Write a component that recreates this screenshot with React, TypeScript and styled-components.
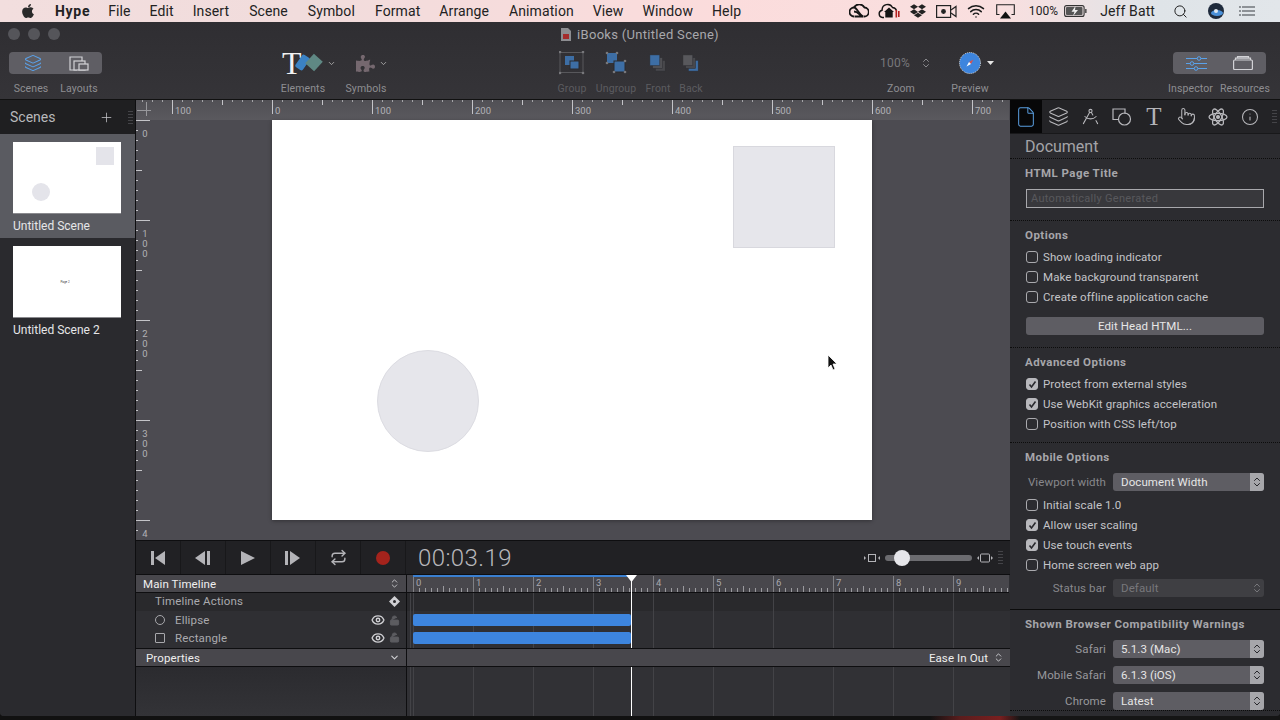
import React from "react";
import styled, { createGlobalStyle } from "styled-components";
import { ChevronDown, ChevronsUpDown, DraftingCompass, Eye, File as FileIcon, Info, Layers, LockOpen, Pointer, Repeat, Search, Wifi, Plus } from "lucide-react";
import { FaApple, FaDropbox, FaPuzzlePiece } from "react-icons/fa";

const UI = `Roboto, "Liberation Sans", sans-serif`;

const Global = createGlobalStyle`
  html, body { margin: 0; padding: 0; height: 100%; background: #121214; overflow: hidden; }
  #root { width: 1280px; height: 720px; overflow: hidden; }
  * { box-sizing: border-box; }
`;

const Page = styled.div`
  width: 1280px; height: 720px; display: flex; flex-direction: column; font-family: ${UI};
  background: linear-gradient(90deg, #111 0 930px, #5a1d1d 960px, #7a1f1f 1000px, #151515 1020px);
`;
const MenuBar = styled.div`
  height: 22px; flex: none; display: flex; align-items: center; color: #222; font-size: 14px;
  background: linear-gradient(90deg, #f2dede 0, #f1dcdc 300px, #fbdcdc 720px, #f9dfdf 1000px, #dfe4e8 1160px, #e2e6ea 1280px);
`;
const AppleSlot = styled.span` width: 55px; display: flex; justify-content: center; `;
const MenuItem = styled.span<{ $bold?: boolean; $ml?: number; $size?: number }>`
  font-weight: ${(p) => (p.$bold ? 700 : 400)};
  font-size: ${(p) => p.$size ?? 14}px;
  letter-spacing: ${(p) => (p.$bold ? 0.7 : 0.1)}px;
  margin-left: ${(p) => p.$ml ?? 0}px; white-space: nowrap;
`;
const MenuExtras = styled.div` margin-left: auto; padding-right: 18px; display: flex; align-items: center; height: 22px; `;
const Slot = styled.span<{ $w: number; $ml?: number }>`
  width: ${(p) => p.$w}px; margin-left: ${(p) => p.$ml ?? 0}px; display: flex; align-items: center; justify-content: center;
`;

const Win = styled.div`
  height: 694px; flex: none; display: flex; flex-direction: column; background: #2b2b2f;
  border-radius: 0 0 4px 4px; overflow: hidden;
`;
const Toolbar = styled.div`
  height: 78px; flex: none; background: linear-gradient(#2f2e32, #353438); border-bottom: 1px solid #111; position: relative;
  display: flex; flex-direction: column;
`;
const TitleRow = styled.div` height: 30px; flex: none; padding-bottom: 6px; display: flex; align-items: center; position: relative; justify-content: center; color: #a8a8ac; font-size: 13px; gap: 6px; letter-spacing: .3px; `;
const Lights = styled.div` position: absolute; left: 8px; top: 6px; display: flex; gap: 8px; `;
const Light = styled.i` width: 12px; height: 12px; border-radius: 50%; background: #55555a; display: block; `;
const ToolRow = styled.div` display: flex; padding-left: 9px; `;
const ToolItem = styled.div<{ $w: number; $ml?: number; $off?: boolean }>`
  width: ${(p) => p.$w}px; margin-left: ${(p) => p.$ml ?? 0}px; display: flex; flex-direction: column; align-items: center;
  color: ${(p) => (p.$off ? "#5c5c60" : "#8e8e92")}; font-size: 10.5px; letter-spacing: .1px; white-space: nowrap;
`;
const ToolIcon = styled.div<{ $seg?: "l" | "r"; $pl?: number; $start?: boolean }>`
  height: 22px; width: 100%; display: flex; align-items: center; justify-content: ${(p) => (p.$start ? "flex-start" : "center")}; gap: 1px;
  padding-left: ${(p) => p.$pl ?? 0}px;
  background: ${(p) => (p.$seg ? "#5f5e64" : "transparent")};
  border-radius: ${(p) => (p.$seg === "l" ? "4px 0 0 4px" : p.$seg === "r" ? "0 4px 4px 0" : "0")};
  & > svg, & > span { flex: none; }
`;
const ToolLabel = styled.div<{ $mr?: number; $ml?: number }>`
  height: 12px; line-height: 12px; margin: 9px ${(p) => p.$mr ?? 0}px 0 ${(p) => p.$ml ?? 0}px;
`;
const SerifT = styled.span` font-family: "Liberation Serif", serif; color: #f2f2f2; font-size: 32px; line-height: 22px; width: 12px; `;
const ZoomValue = styled.span` color: #77777b; font-size: 12px; letter-spacing: .2px; margin-right: 9px; `;

const Main = styled.div` flex: 1; min-height: 0; display: flex; `;
const Sidebar = styled.div` width: 136px; flex: none; background: #2a2a2e; border-right: 1px solid #0e0e10; display: flex; flex-direction: column; `;
const SideHead = styled.div`
  height: 34px; flex: none; background: #1f1f21; color: #b8b8bc; font-size: 14px; display: flex; align-items: center; padding: 0 2px 0 10px; justify-content: space-between;
`;
const SideTools = styled.div` display: flex; align-items: center; gap: 14px; `;
const SceneCard = styled.div<{ $on?: boolean }>`
  height: 104px; flex: none; padding: 8px 14px 0 13px; background: ${(p) => (p.$on ? "#5a5b61" : "transparent")};
`;
const Thumb = styled.div` width: 108px; height: 71px; background: #fff; position: relative; display: flex; align-items: center; justify-content: center; box-shadow: 0 1px 0 #8a8a8e; `;
const ThumbRect = styled.i` position: absolute; left: 83px; top: 5px; width: 18px; height: 18px; background: #e4e4ea; `;
const ThumbCircle = styled.i` position: absolute; left: 19px; top: 41px; width: 18px; height: 18px; border-radius: 50%; background: #e4e4ea; `;
const ThumbText = styled.span` font-size: 3px; color: #444; margin-right: 4px; `;
const SceneName = styled.div` margin-top: 6px; font-size: 12px; line-height: 14px; color: #e6e6e8; `;

const Center = styled.div` flex: 1; min-width: 0; display: flex; flex-direction: column; background: #4c4b51; `;
const TopRuler = styled.svg` display: block; flex: none; background: linear-gradient(#515055, #5a595e); `;
const StageRow = styled.div` height: 420px; flex: none; display: flex; position: relative; `;
const SideRuler = styled.svg` display: block; flex: none; `;
const Artboard = styled.div` width: 600px; height: 400px; background: #fff; margin-left: 122px; position: relative; box-shadow: 0 1px 4px rgba(0,0,0,.35); `;
const ArtRect = styled.div` position: absolute; left: 461px; top: 26px; width: 102px; height: 102px; background: #e6e6eb; border: 1px solid #d8d8de; `;
const ArtCircle = styled.div` position: absolute; left: 105px; top: 230px; width: 102px; height: 102px; border-radius: 50%; background: #e6e6eb; border: 1px solid #dcdce2; `;
const Cursor = styled.svg` position: absolute; left: 555px; top: 234px; `;

const Timeline = styled.div` height: 176px; flex: none; display: flex; flex-direction: column; background: #2e2e32; border-top: 1px solid #0e0e10; `;
const Transport = styled.div` height: 34px; flex: none; display: flex; align-items: stretch; background: #212124; border-bottom: 1px solid #0e0e10; `;
const TransportBtn = styled.div` width: 45px; display: flex; align-items: center; justify-content: center; border-right: 1px solid #18181a; color: #b4b4b8; `;
const Timecode = styled.div` font-size: 24px; font-weight: 300; color: #b8b8bc; margin-left: 12px; width: 446px; line-height: 34px; letter-spacing: .4px; `;
const ZoomSlider = styled.div` display: flex; align-items: center; gap: 5px; `;
const SliderTrack = styled.div` width: 87px; height: 6px; border-radius: 3px; background: #6c6c70; position: relative; `;
const SliderThumb = styled.i` position: absolute; left: 9px; top: -5px; width: 16px; height: 16px; border-radius: 50%; background: #e6e6ea; `;

const Upper = styled.div` display: flex; flex: none; border-bottom: 1px solid #0e0e10; `;
const Labels = styled.div` width: 271px; flex: none; border-right: 1px solid #0e0e10; display: flex; flex-direction: column; `;
const HeadRow = styled.div`
  height: 18px; flex: none; background: #48474c; border-bottom: 1px solid #0e0e10; display: flex; align-items: center; justify-content: space-between;
  color: #f0f0f0; font-size: 11.5px; padding: 0 6px 0 7px; letter-spacing: .1px;
`;
const LabelRow = styled.div<{ $h: number; $dark?: boolean; $pb?: number }>`
  height: ${(p) => p.$h}px; flex: none; display: flex; align-items: center; padding: 0 6px ${(p) => p.$pb ?? 0}px 19px; font-size: 11.5px; letter-spacing: .15px;
  background: ${(p) => (p.$dark ? "#29292c" : "#2f2f33")}; color: #aaaaae;
`;
const RowName = styled.span<{ $ml?: number }>` margin-left: ${(p) => p.$ml ?? 0}px; flex: 1; `;
const Shape = styled.i<{ $round?: boolean }>` width: 10px; height: 10px; border: 1px solid #a8a8ac; border-radius: ${(p) => (p.$round ? "50%" : "1px")}; display: block; `;
const Tracks = styled.div` flex: 1; min-width: 0; position: relative; display: flex; flex-direction: column; `;
const gridBg = `repeating-linear-gradient(90deg, #434347 0 1px, transparent 1px 60px)`;
const TrackRuler = styled.svg` display: block; flex: none; background: #48474c; border-bottom: 1px solid #0e0e10; `;
const TrackRow = styled.div<{ $h: number; $dark?: boolean }>`
  height: ${(p) => p.$h}px; flex: none; padding: 3px 0 0 6px;
  background-image: ${gridBg}; background-position: 6px 0; background-color: ${(p) => (p.$dark ? "#29292c" : "#2f2f33")};
`;
const Bar = styled.div` width: 218px; height: 12px; border-radius: 2px; background: #3d85de; `;
const Playhead = styled.i` position: absolute; left: 224px; top: 0; bottom: 0; width: 1px; background: #fff; `;
const Head = styled.svg` position: absolute; left: 219px; top: 0; `;
const Progress = styled.i` position: absolute; left: 6px; top: 0; width: 218px; height: 2px; background: #3a7fd0; `;
const PropsBar = styled.div` height: 18px; flex: none; display: flex; background: #48474c; border-bottom: 1px solid #0e0e10; color: #eee; font-size: 11.5px; letter-spacing: .1px; `;
const PropsLeft = styled.div` width: 271px; flex: none; display: flex; align-items: center; justify-content: space-between; padding: 0 6px 0 10px; border-right: 1px solid #0e0e10; `;
const PropsRight = styled.div` flex: 1; display: flex; align-items: center; justify-content: flex-end; padding-right: 6px; gap: 5px; `;
const Lower = styled.div` flex: 1; display: flex; min-height: 0; `;
const LowerLeft = styled.div` width: 271px; flex: none; border-right: 1px solid #0e0e10; background: linear-gradient(#2b2b2f, #333337); `;
const LowerRight = styled.div` flex: 1; position: relative; background-image: ${gridBg}; background-position: 6px 0; background-color: #313135; `;

const Inspector = styled.div` width: 270px; flex: none; background: #2c2c30; overflow: hidden; display: flex; flex-direction: column; `;
const Tabs = styled.div` height: 34px; flex: none; display: flex; background: #232326; border-bottom: 1px solid #18181a; `;
const Tab = styled.div<{ $on?: boolean; $w?: number }>`
  width: ${(p) => p.$w ?? 32}px; flex: none; display: flex; align-items: center; justify-content: center; color: #b8b8bc;
  background: ${(p) => (p.$on ? "#070708" : "transparent")};
`;
const SerifTab = styled.span` font-family: "Liberation Serif", serif; font-size: 25px; line-height: 25px; color: #b4b4b8; `;
const DocTitle = styled.div` height: 25px; flex: none; color: #a4a4a8; font-size: 16px; line-height: 25px; padding-left: 15px; border-bottom: 1px dotted #0c0c0c; `;
const Section = styled.section<{ $pb?: number; $solid?: boolean }>`
  flex: none; padding: 7px 16px ${(p) => p.$pb ?? 12}px 15px; border-bottom: 1px ${(p) => (p.$solid ? "solid" : "dotted")} #0c0c0c;
`;
const Heading = styled.h4<{ $mb?: number }>` margin: 0 0 ${(p) => p.$mb ?? 5}px; font-size: 11.5px; line-height: 14px; font-weight: 700; color: #a6a6aa; letter-spacing: .45px; `;
const TextBox = styled.div` height: 19px; margin-left: 1px; border: 1px solid #a8a8ac; background: #38383c; color: #58585c; font-size: 11px; line-height: 18px; padding-left: 4px; letter-spacing: .3px; `;
const CheckRow = styled.div` height: 20px; display: flex; align-items: center; gap: 5px; margin-left: 1px; font-size: 11.5px; color: #c4c4c8; letter-spacing: .1px; `;
const Box = styled.span<{ $on?: boolean }>`
  width: 12px; height: 12px; border-radius: 3px; flex: none; display: flex; align-items: center; justify-content: center;
  border: 1px solid ${(p) => (p.$on ? "#b8b8bc" : "#aaaaae")}; background: ${(p) => (p.$on ? "#b8b8bc" : "transparent")};
`;
const Btn = styled.div` height: 18px; margin: 10px 0 0 1px; border-radius: 3px; background: #5e5d63; color: #e6e6e6; font-size: 11.5px; line-height: 18px; text-align: center; letter-spacing: .1px; `;
const FormRow = styled.div<{ $mt?: number }>` display: flex; align-items: center; gap: 7px; margin-top: ${(p) => p.$mt ?? 0}px; height: 18px; `;
const FormLabel = styled.span<{ $dim?: boolean }>` width: 81px; flex: none; text-align: right; font-size: 11.5px; color: ${(p) => (p.$dim ? "#88888c" : "#98989c")}; white-space: nowrap; letter-spacing: .1px; `;
const Select = styled.div<{ $off?: boolean }>`
  flex: 1; height: 18px; display: flex; border-radius: 3px; overflow: hidden; background: ${(p) => (p.$off ? "#3f3f43" : "#5e5d63")};
  color: ${(p) => (p.$off ? "#77777b" : "#e6e6e6")}; font-size: 11.5px; line-height: 18px; letter-spacing: .1px;
`;
const SelectText = styled.span` flex: 1; padding-left: 8px; `;
const Stepper = styled.span<{ $off?: boolean }>` width: 14px; display: flex; align-items: center; justify-content: center; background: ${(p) => (p.$off ? "transparent" : "#a6a6aa")}; color: ${(p) => (p.$off ? "#77777b" : "#26262a")}; `;
const BoxGap = styled.div` height: 4px; `;

const range = (n: number) => Array.from({ length: n }, (_, i) => i);

function Check({ on, children }: { on?: boolean; children: React.ReactNode }) {
  return (
    <CheckRow>
      <Box $on={on}>
        {on && (
          <svg width="9" height="9" viewBox="0 0 9 9"><path d="M1.5 4.5l2 2.5 4-5.5" fill="none" stroke="#2a2a2e" strokeWidth="1.6" /></svg>
        )}
      </Box>
      {children}
    </CheckRow>
  );
}
function Sel({ label, value, off, mt, dim }: { label: string; value: string; off?: boolean; mt?: number; dim?: boolean }) {
  return (
    <FormRow $mt={mt}>
      <FormLabel $dim={dim}>{label}</FormLabel>
      <Select $off={off}>
        <SelectText>{value}</SelectText>
        <Stepper $off={off}><ChevronsUpDown size={12} strokeWidth={2} /></Stepper>
      </Select>
    </FormRow>
  );
}
function RulerTop() {
  const origin = 136;
  return (
    <TopRuler width={873} height={20}>
      {range(88).map((i) => {
        const x = i * 10 + 6;
        const v = x - origin;
        const major = v % 100 === 0;
        const mid = v % 50 === 0;
        return <rect key={i} x={x} y={0} width={1} height={major ? 14 : mid ? 5 : 2} fill={major || mid ? "#c4c4c8" : "#a4a4a8"} />;
      })}
      <path d="M1 10.500h14M10.500 2v14" stroke="#98989c" fill="none" />
      {range(9).map((i) => {
        const x = i * 100 + 36;
        const v = Math.abs(x - origin);
        return <text key={i} x={x + 3} y={14} fontSize="9.5" fontFamily={UI} fill="#b2b2b6">{v}</text>;
      })}
    </TopRuler>
  );
}
function RulerSide() {
  return (
    <SideRuler width={14} height={420}>
      {range(42).map((i) => {
        const y = i * 10;
        const major = i % 10 === 0;
        const mid = i % 5 === 0;
        return <rect key={i} x={0} y={y} width={major ? 14 : mid ? 6 : 2} height={1} fill="#c4c4c8" />;
      })}
      {[["0"], ["1", "0", "0"], ["2", "0", "0"], ["3", "0", "0"], ["4"]].map((d, n) =>
        d.map((c, i) => (
          <text key={`${n}-${i}`} x={9} y={n * 100 + 17 + i * 10} fontSize="9.5" fontFamily={UI} textAnchor="middle" fill="#b2b2b6">{c}</text>
        ))
      )}
    </SideRuler>
  );
}
function RulerTrack() {
  return (
    <TrackRuler width={602} height={18}>
      {range(100).map((i) => {
        const x = i * 6 + 6;
        const sec = i % 10 === 0;
        const half = i % 5 === 0;
        return <rect key={i} x={x} y={sec ? 1 : half ? 11 : 13} width={1} height={sec ? 16 : half ? 6 : 4} fill={sec ? "#808084" : "#9a9a9e"} />;
      })}
      {range(10).map((i) => (
        <text key={i} x={i * 60 + 9} y={11} fontSize="9.5" fontFamily={UI} fill="#a8a8ac">{i}</text>
      ))}
    </TrackRuler>
  );
}
const Grip = () => (
  <svg width="5" height="13" viewBox="0 0 5 13">
    {range(5).map((i) => <rect key={i} x="0" y={i * 3} width="5" height="1" fill="#444448" />)}
  </svg>
);
const RowEye = () => <Eye size={14} color="#d0d0d4" strokeWidth={2.4} />;
const RowLock = () => <LockOpen size={11} color="#5c5c60" fill="#5c5c60" style={{ marginLeft: 4 }} />;

export default function App() {
  return (
    <Page>
      <Global />
      <MenuBar>
        <AppleSlot><FaApple size={16} color="#2a2a2a" /></AppleSlot>
        <MenuItem $bold>Hype</MenuItem>
        <MenuItem $ml={18}>File</MenuItem>
        <MenuItem $ml={19}>Edit</MenuItem>
        <MenuItem $ml={19}>Insert</MenuItem>
        <MenuItem $ml={20}>Scene</MenuItem>
        <MenuItem $ml={20}>Symbol</MenuItem>
        <MenuItem $ml={20}>Format</MenuItem>
        <MenuItem $ml={19}>Arrange</MenuItem>
        <MenuItem $ml={20}>Animation</MenuItem>
        <MenuItem $ml={19}>View</MenuItem>
        <MenuItem $ml={19}>Window</MenuItem>
        <MenuItem $ml={19}>Help</MenuItem>
        <MenuExtras>
          <Slot $w={30}>
            <svg width="20" height="14" viewBox="0 0 20 14" fill="none" stroke="#151515" strokeWidth="1.8">
              <path d="M5 12.5a4 4 0 0 1 0-9c3 0 5 7 9 9" /><path d="M15 12.5a4.5 4.5 0 0 0 .5-9A6 6 0 0 0 5 3.5" /><path d="M5.5 12.5h9M5 7.5c4 0 5 3 7 4" />
            </svg>
          </Slot>
          <Slot $w={30}>
            <svg width="22" height="16" viewBox="0 0 22 16" fill="none">
              <path d="M6 14.5H4.5a3.7 3.7 0 0 1-.4-7.3A5.5 5.5 0 0 1 14.5 4.5a4.8 4.8 0 0 1 4 3" stroke="#151515" strokeWidth="1.4" />
              <path d="M6 9l5-4.5L16 9h-1.3v5.5H7.300V9z" fill="#151515" />
              <rect x="17.5" y="7" width="1.6" height="7.5" fill="#b32020" /><rect x="20" y="8" width="1.6" height="6" fill="#b32020" />
            </svg>
          </Slot>
          <Slot $w={28}><FaDropbox size={16} color="#222" /></Slot>
          <Slot $w={30}>
            <svg width="21" height="13" viewBox="0 0 21 13" fill="none" stroke="#222" strokeWidth="1.2">
              <rect x=".6" y=".6" width="14" height="11.8" /><circle cx="7.500" cy="6.500" r="1.800" fill="#222" /><path d="M15 5l5-3.500v10L15 8" />
            </svg>
          </Slot>
          <Slot $w={29}><Wifi size={18} color="#1a1a1a" strokeWidth={2} /></Slot>
          <Slot $w={30}>
            <svg width="19" height="15" viewBox="0 0 19 15" fill="none">
              <path d="M3.500 10.500H.7V.7h17.600v9.800h-2.800" stroke="#222" strokeWidth="1.1" /><path d="M9.500 7.500l5.500 7H4z" fill="#111" />
            </svg>
          </Slot>
          <MenuItem $ml={8} $size={12}>100%</MenuItem>
          <Slot $w={34}>
            <svg width="23" height="12" viewBox="0 0 23 12" fill="none">
              <rect x=".6" y=".6" width="19.500" height="10.800" rx="2" stroke="#333" strokeWidth="1.1" /><rect x="2" y="2" width="16.500" height="8" rx="1" fill="#555" />
              <path d="M11.500 1L7.500 6.800h3L9 11l5-6h-3z" fill="#eee" /><rect x="21.200" y="4" width="1.300" height="4" fill="#333" />
            </svg>
          </Slot>
          <MenuItem $ml={8}>Jeff Batt</MenuItem>
          <Slot $w={30} $ml={10}><Search size={15} color="#222" strokeWidth={1.6} /></Slot>
          <Slot $w={30} $ml={6}>
            <svg width="16" height="16" viewBox="0 0 16 16"><circle cx="8" cy="8" r="8" fill="#1e2a3c" /><ellipse cx="9" cy="10" rx="6" ry="3" fill="#4a90d9" /><circle cx="8" cy="8" r="2" fill="#dfe8f0" /></svg>
          </Slot>
          <Slot $w={30} $ml={1}>
            <svg width="16" height="11" viewBox="0 0 16 11" fill="#8d9196">{range(3).map((i) => <g key={i}><rect y={i * 4} width="2" height="2" /><rect x="3" y={i * 4} width="13" height="2" /></g>)}</svg>
          </Slot>
        </MenuExtras>
      </MenuBar>

      <Win>
        <Toolbar>
          <TitleRow>
            <Lights><Light /><Light /><Light /></Lights>
            <svg width="10" height="13" viewBox="0 0 10 13"><path d="M0 0h7l3 3v10H0z" fill="#8d8d91" /><rect x="2" y="6" width="6" height="5" fill="#a42b2b" /></svg>
            iBooks (Untitled Scene)
          </TitleRow>
          <ToolRow>
            <ToolItem $w={47}>
              <ToolIcon $seg="l"><Layers size={18} color="#5aa2ea" strokeWidth={1.4} /></ToolIcon>
              <ToolLabel $mr={3}>Scenes</ToolLabel>
            </ToolItem>
            <ToolItem $w={46}>
              <ToolIcon $seg="r">
                <svg width="20" height="15" viewBox="0 0 20 15" fill="none" stroke="#d2d2d6" strokeWidth="1.200"><path d="M8 14H1V1h12v4" /><rect x="5" y="5" width="11" height="9" fill="#5f5e64" /><rect x="10" y="8" width="9" height="6" fill="#5f5e64" /></svg>
              </ToolIcon>
              <ToolLabel>Layouts</ToolLabel>
            </ToolItem>
            <ToolItem $w={50} $ml={176}>
              <ToolIcon $start $pl={4}>
                <SerifT>T</SerifT>
                <svg width="29" height="22" viewBox="0 0 29 22"><rect x="3" y="3" width="9" height="15" rx="2" transform="rotate(35 7.500 10.500)" fill="#3b82c4" /><rect x="13" y="4" width="12" height="13" transform="rotate(42 19 10.500)" fill="#5f8884" /></svg>
                <ChevronDown size={9} color="#aaa" strokeWidth={2.4} style={{ marginLeft: 2 }} />
              </ToolIcon>
              <ToolLabel>Elements</ToolLabel>
            </ToolItem>
            <ToolItem $w={50} $ml={13}>
              <ToolIcon $start $pl={15}>
                <FaPuzzlePiece size={19} color="#75686f" />
                <ChevronDown size={9} color="#aaa" strokeWidth={2.4} style={{ marginLeft: 3 }} />
              </ToolIcon>
              <ToolLabel>Symbols</ToolLabel>
            </ToolItem>
            <ToolItem $w={40} $off $ml={161}>
              <ToolIcon>
                <svg width="26" height="24" viewBox="0 0 26 24"><rect x="1" y="1.500" width="23" height="20" fill="none" stroke="#58585c" /><rect x="6" y="5" width="9" height="9" fill="#3d6ea5" /><rect x="11" y="10" width="9" height="8" fill="#3d6ea5" stroke="#2a2a2e" />{[[1, 1], [24, 1], [1, 22], [24, 22]].map(([a, b], i) => <circle key={i} cx={a} cy={b} r="1.300" fill="#77777b" />)}</svg>
              </ToolIcon>
              <ToolLabel>Group</ToolLabel>
            </ToolItem>
            <ToolItem $w={40} $off $ml={4}>
              <ToolIcon>
                <svg width="24" height="24" viewBox="0 0 24 24"><rect x="3" y="2" width="10" height="10" fill="#3d6ea5" /><rect x="10" y="10" width="11" height="11" fill="#3d6ea5" stroke="#2a2a2e" />{[[3, 2], [13, 2], [3, 12], [21, 10], [10, 21], [21, 21]].map(([a, b], i) => <circle key={i} cx={a} cy={b} r="1.300" fill="#77777b" />)}</svg>
              </ToolIcon>
              <ToolLabel>Ungroup</ToolLabel>
            </ToolItem>
            <ToolItem $w={36} $off $ml={4}>
              <ToolIcon>
                <svg width="18" height="18" viewBox="0 0 20 20"><rect x="7" y="7" width="11" height="12" fill="#48484c" stroke="#2e2e32" strokeWidth=".6" /><rect x="4" y="4" width="11" height="12" fill="#505054" stroke="#2e2e32" strokeWidth=".6" /><rect x="1" y="1" width="11" height="12" fill="#3d6ea5" stroke="#2e2e32" strokeWidth=".6" /></svg>
              </ToolIcon>
              <ToolLabel>Front</ToolLabel>
            </ToolItem>
            <ToolItem $w={30} $off>
              <ToolIcon>
                <svg width="18" height="18" viewBox="0 0 20 20"><rect x="7" y="7" width="11" height="12" fill="#3d6ea5" stroke="#2e2e32" strokeWidth=".6" /><rect x="4" y="4" width="11" height="12" fill="#48484c" stroke="#2e2e32" strokeWidth=".6" /><rect x="1" y="1" width="11" height="12" fill="#58585c" stroke="#2e2e32" strokeWidth=".6" /></svg>
              </ToolIcon>
              <ToolLabel>Back</ToolLabel>
            </ToolItem>
            <ToolItem $w={60} $ml={165}>
              <ToolIcon $pl={10}><ZoomValue>100%</ZoomValue><ChevronsUpDown size={12} color="#88888c" strokeWidth={2} /></ToolIcon>
              <ToolLabel>Zoom</ToolLabel>
            </ToolItem>
            <ToolItem $w={60} $ml={9}>
              <ToolIcon $pl={14}>
                <svg width="22" height="22" viewBox="0 0 22 22"><circle cx="11" cy="11" r="10.500" fill="#3d85de" stroke="#ddd" strokeDasharray="1 1" /><path d="M14.500 7.500L12 12l-2-2z" fill="#d9534f" /><path d="M7.500 14.500L10 10l2 2z" fill="#fff" /></svg>
                <svg width="14" height="8" viewBox="0 0 14 8"><path d="M5 2h7l-3.500 4z" fill="#e6e6e6" /></svg>
              </ToolIcon>
              <ToolLabel>Preview</ToolLabel>
            </ToolItem>
            <ToolItem $w={47} $ml={173}>
              <ToolIcon $seg="l">
                <svg width="21" height="15" viewBox="0 0 21 15" fill="none" stroke="#5aa2ea" strokeWidth="1">
                  <path d="M0 2.500h21M0 7.500h21M0 12.500h21" />
                  <circle cx="13" cy="2.500" r="1.800" fill="#5f5e64" /><circle cx="6" cy="7.500" r="1.800" fill="#5f5e64" /><circle cx="10" cy="12.500" r="1.800" fill="#5f5e64" />
                </svg>
              </ToolIcon>
              <ToolLabel $mr={12}>Inspector</ToolLabel>
            </ToolItem>
            <ToolItem $w={46}>
              <ToolIcon $seg="r">
                <svg width="20" height="14" viewBox="0 0 20 14" fill="none" stroke="#d2d2d6" strokeWidth="1.200"><rect x=".6" y="4" width="18.800" height="9.500" rx="1" /><path d="M2.500 4V2.200h15V4M4.500 2V.7h11V2" /></svg>
              </ToolIcon>
              <ToolLabel $ml={4}>Resources</ToolLabel>
            </ToolItem>
          </ToolRow>
        </Toolbar>

        <Main>
          <Sidebar>
            <SideHead>
              Scenes
              <SideTools>
                <Plus size={15} color="#c8c8cc" strokeWidth={1.2} />
                <Grip />
              </SideTools>
            </SideHead>
            <SceneCard $on>
              <Thumb><ThumbRect /><ThumbCircle /></Thumb>
              <SceneName>Untitled Scene</SceneName>
            </SceneCard>
            <SceneCard>
              <Thumb><ThumbText>Page 2</ThumbText></Thumb>
              <SceneName>Untitled Scene 2</SceneName>
            </SceneCard>
          </Sidebar>

          <Center>
            <RulerTop />
            <StageRow>
              <RulerSide />
              <Artboard>
                <ArtRect />
                <ArtCircle />
                <Cursor width="12" height="18" viewBox="0 0 12 18">
                  <path d="M1 1v13l3-3 2 5 2-1-2-5h4z" fill="#111" stroke="#fff" strokeWidth=".8" />
                </Cursor>
              </Artboard>
            </StageRow>
            <Timeline>
              <Transport>
                <TransportBtn>
                  <svg width="14" height="14" viewBox="0 0 14 14" fill="currentColor"><rect x="0" y="0" width="3" height="14" /><path d="M14 0v14L4 7z" /></svg>
                </TransportBtn>
                <TransportBtn>
                  <svg width="16" height="14" viewBox="0 0 16 14" fill="currentColor"><path d="M10 0v14L0 7z" /><rect x="12" y="0" width="3" height="14" /></svg>
                </TransportBtn>
                <TransportBtn>
                  <svg width="14" height="14" viewBox="0 0 14 14" fill="currentColor"><path d="M0 0v14l14-7z" /></svg>
                </TransportBtn>
                <TransportBtn>
                  <svg width="16" height="14" viewBox="0 0 16 14" fill="currentColor"><rect x="0" y="0" width="3" height="14" /><path d="M5 0v14l10-7z" /></svg>
                </TransportBtn>
                <TransportBtn><Repeat size={17} strokeWidth={2} /></TransportBtn>
                <TransportBtn>
                  <svg width="14" height="14" viewBox="0 0 14 14"><circle cx="7" cy="7" r="7" fill="#a4231c" /></svg>
                </TransportBtn>
                <Timecode>00:03.19</Timecode>
                <ZoomSlider>
                  <svg width="16" height="10" viewBox="0 0 16 10" fill="none" stroke="#b4b4b8"><rect x="4.500" y="1.500" width="7" height="7" /><path d="M0 3v4l2-2zM16 3v4l-2-2z" fill="#b4b4b8" stroke="none" /></svg>
                  <SliderTrack><SliderThumb /></SliderTrack>
                  <svg width="16" height="10" viewBox="0 0 16 10" fill="none" stroke="#b4b4b8"><rect x="3.500" y="1" width="9" height="8" rx="1" /><path d="M2 3v4L0 5zM14 3v4l2-2z" fill="#b4b4b8" stroke="none" /></svg>
                  <Grip />
                </ZoomSlider>
              </Transport>
              <Upper>
                <Labels>
                  <HeadRow>Main Timeline<ChevronsUpDown size={11} color="#c8c8cc" strokeWidth={2} /></HeadRow>
                  <LabelRow $h={18} $dark $pb={2}>
                    <RowName>Timeline Actions</RowName>
                    <svg width="11" height="11" viewBox="0 0 11 11"><path d="M5.500 0l5.500 5.500L5.500 11 0 5.500z" fill="#d0d0d4" /><circle cx="5.500" cy="5.500" r="1.500" fill="#2a2a2e" /></svg>
                  </LabelRow>
                  <LabelRow $h={18}>
                    <Shape $round /><RowName $ml={10}>Ellipse</RowName>
                    <RowEye />
                    <RowLock />
                  </LabelRow>
                  <LabelRow $h={19} $pb={2}>
                    <Shape /><RowName $ml={10}>Rectangle</RowName>
                    <RowEye />
                    <RowLock />
                  </LabelRow>
                </Labels>
                <Tracks>
                  <RulerTrack />
                  <TrackRow $h={18} $dark />
                  <TrackRow $h={18}><Bar /></TrackRow>
                  <TrackRow $h={19}><Bar /></TrackRow>
                  <Progress />
                  <Playhead />
                  <Head width="11" height="7" viewBox="0 0 11 7"><path d="M0 0h11L5.500 7z" fill="#fff" /></Head>
                </Tracks>
              </Upper>
              <PropsBar>
                <PropsLeft>Properties<ChevronDown size={11} color="#d0d0d4" strokeWidth={2.4} /></PropsLeft>
                <PropsRight>Ease In Out<ChevronsUpDown size={11} color="#d0d0d4" strokeWidth={2} /></PropsRight>
              </PropsBar>
              <Lower>
                <LowerLeft />
                <LowerRight><Playhead /></LowerRight>
              </Lower>
            </Timeline>
          </Center>

          <Inspector>
            <Tabs>
              <Tab $on><FileIcon size={22} color="#5a9ee0" strokeWidth={1.1} /></Tab>
              <Tab><Layers size={21} strokeWidth={1.2} /></Tab>
              <Tab><DraftingCompass size={19} strokeWidth={1.3} /></Tab>
              <Tab>
                <svg width="20" height="18" viewBox="0 0 20 18" fill="none" stroke="currentColor" strokeWidth="1.200"><path d="M7 11.500H1V1h12v5" /><circle cx="12.500" cy="11" r="6" /></svg>
              </Tab>
              <Tab><SerifTab>T</SerifTab></Tab>
              <Tab><Pointer size={19} strokeWidth={1.3} /></Tab>
              <Tab>
                <svg width="20" height="20" viewBox="0 0 20 20" fill="none" stroke="currentColor" strokeWidth="1.300">
                  <ellipse cx="10" cy="10" rx="9" ry="3.600" /><ellipse cx="10" cy="10" rx="9" ry="3.600" transform="rotate(60 10 10)" /><ellipse cx="10" cy="10" rx="9" ry="3.600" transform="rotate(120 10 10)" /><circle cx="10" cy="10" r="1.400" fill="currentColor" />
                </svg>
              </Tab>
              <Tab><Info size={18} strokeWidth={1.4} /></Tab>
              <Tab $w={16}><Grip /></Tab>
            </Tabs>
            <DocTitle>Document</DocTitle>
            <Section>
              <Heading $mb={9}>HTML Page Title</Heading>
              <TextBox>Automatically Generated</TextBox>
            </Section>
            <Section>
              <Heading>Options</Heading>
              <Check>Show loading indicator</Check>
              <Check>Make background transparent</Check>
              <Check>Create offline application cache</Check>
              <Btn>Edit Head HTML...</Btn>
            </Section>
            <Section $pb={8}>
              <Heading>Advanced Options</Heading>
              <Check on>Protect from external styles</Check>
              <Check on>Use WebKit graphics acceleration</Check>
              <Check>Position with CSS left/top</Check>
            </Section>
            <Section $solid>
              <Heading $mb={9}>Mobile Options</Heading>
              <Sel label="Viewport width" value="Document Width" dim />
              <BoxGap />
              <Check>Initial scale 1.0</Check>
              <Check on>Allow user scaling</Check>
              <Check on>Use touch events</Check>
              <Check>Home screen web app</Check>
              <Sel label="Status bar" value="Default" off mt={4} dim />
            </Section>
            <Section $pb={0}>
              <Heading $mb={9}>Shown Browser Compatibility Warnings</Heading>
              <Sel label="Safari" value="5.1.3 (Mac)" />
              <Sel label="Mobile Safari" value="6.1.3 (iOS)" mt={8} />
              <Sel label="Chrome" value="Latest" mt={8} />
            </Section>
          </Inspector>
        </Main>
      </Win>
    </Page>
  );
}
